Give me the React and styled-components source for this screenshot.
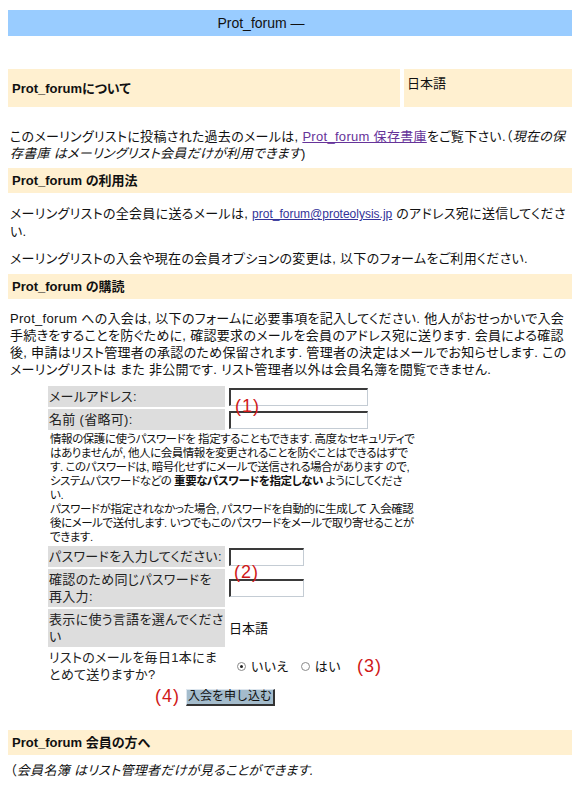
import React from 'react'
import styled, { createGlobalStyle } from 'styled-components'

const GlobalStyle = createGlobalStyle`
  body {
    margin: 8px;
    background: #fff;
    color: #111;
    font-family: "Liberation Sans", "Noto Sans CJK JP", sans-serif;
    font-size: 13px;
    line-height: 17px;
    font-feature-settings: "palt";
  }
`

const Page = styled.div`
  display: flex;
  flex-direction: column;
`

const TitleBar = styled.div`
  margin-top: 2px;
  height: 26px;
  padding-right: 58px;
  background: #99ccff;
  display: flex;
  align-items: center;
  justify-content: center;
  font-size: 14px;
`

const AboutRow = styled.div`
  margin-top: 33px;
  height: 38px;
  display: flex;
  gap: 4px;
`

const AboutCell = styled.div`
  flex: 1;
  background: #fff0d0;
  display: flex;
  align-items: center;
  padding-left: 4px;
  font-weight: bold;
`

const LangCell = styled.div`
  box-sizing: border-box;
  width: 168px;
  background: #fff0d0;
  padding: 6px 3px;
`

const SectionBar = styled.div`
  margin-top: ${p => p.$top}px;
  height: 25px;
  line-height: 25px;
  padding-left: 4px;
  background: #fff0d0;
  font-weight: bold;
`

const Para = styled.p`
  margin: ${p => p.$top}px 0 0 2px;
  letter-spacing: 0.3px;
`

const ArchiveLink = styled.a`
  color: #663399;
  text-decoration: underline;
`

const MailLink = styled.a`
  color: #333399;
  font-size: 12px;
  letter-spacing: 0;
  text-decoration: underline;
`

const Form = styled.div`
  position: relative;
  margin: 8px 0 0 40px;
  width: 365px;
  display: grid;
  grid-template-columns: 177px 1fr;
  column-gap: 4px;
  row-gap: 2px;
`

const Label = styled.div`
  background: ${p => (p.$plain ? 'transparent' : '#dddddd')};
  padding: ${p => (p.$plain ? '0 1px' : '2px 1px')};
  color: #222;
  letter-spacing: 0.3px;
`

const Field = styled.div`
  display: flex;
  align-items: center;
  padding-left: ${p => p.$indent || 0}px;
`

const TextInput = styled.input`
  box-sizing: border-box;
  width: ${p => p.$w}px;
  height: 18px;
  margin: 0;
  padding: 0 2px;
  border-top: 2px solid #3a3a3a;
  border-left: 2px solid #3a3a3a;
  border-right: 1px solid #c4ccd4;
  border-bottom: 1px solid #c4ccd4;
  background: #fff;
`

const Note = styled.div`
  grid-column: 1 / span 2;
  font-size: 11.5px;
  line-height: 14px;
  letter-spacing: -0.45px;
  white-space: nowrap;
  padding: 0 2px;
`

const Radio = styled.input`
  appearance: none;
  width: 9px;
  height: 9px;
  margin: 0 5px 0 0;
  border: 1px solid #8a8a8a;
  border-radius: 50%;
  background: #fff;
  display: grid;
  place-content: center;
  &:checked::before {
    content: '';
    width: 3px;
    height: 3px;
    border-radius: 50%;
    background: #222;
  }
`

const RadioLabel = styled.label`
  display: inline-flex;
  align-items: center;
  margin-right: 12px;
  letter-spacing: 0.5px;
`

const ButtonRow = styled.div`
  grid-column: 1 / span 2;
  display: flex;
  justify-content: center;
  margin-top: 2px;
`

const ButtonWrap = styled.div`
  position: relative;
`

const SubmitButton = styled.button`
  width: 89px;
  height: 17px;
  padding: 0;
  font-family: inherit;
  font-size: 12px;
  line-height: 13px;
  color: #111;
  background: #a4bccc;
  border-top: 1px solid #dde6ee;
  border-left: 1px solid #dde6ee;
  border-right: 2px solid #333;
  border-bottom: 2px solid #333;
`

const Mark = styled.span`
  color: #d01818;
  font-family: "Liberation Sans", sans-serif;
  font-size: 18px;
  line-height: 20px;
  letter-spacing: 1px;
  ${p => p.$at && `
    position: absolute;
    left: ${p.$at[0]}px;
    top: ${p.$at[1]}px;
  `}
  ${p => p.$before && `
    position: absolute;
    right: calc(100% + 6px);
    top: -1px;
  `}
`

const InlineMark = styled(Mark)`
  margin-left: 4px;
`

export default function App() {
  return (
    <Page>
      <GlobalStyle />
      <TitleBar>Prot_forum —</TitleBar>
      <AboutRow>
        <AboutCell>Prot_forumについて</AboutCell>
        <LangCell>日本語</LangCell>
      </AboutRow>

      <Para $top={21}>
        このメーリングリストに投稿された過去のメールは, <ArchiveLink href="#">Prot_forum 保存書庫</ArchiveLink>をご覧下さい.（<i>現在の保存書庫 はメーリングリスト会員だけが利用できます</i>)
      </Para>

      <SectionBar $top={6}>Prot_forum の利用法</SectionBar>
      <Para $top={12}>
        メーリングリストの全会員に送るメールは, <MailLink href="#">prot_forum@proteolysis.jp</MailLink> のアドレス宛に送信してください.
      </Para>
      <Para $top={10}>メーリングリストの入会や現在の会員オプションの変更は, 以下のフォームをご利用ください.</Para>

      <SectionBar $top={7}>Prot_forum の購読</SectionBar>
      <Para $top={11}>
        Prot_forum への入会は, 以下のフォームに必要事項を記入してください. 他人がおせっかいで入会手続きをすることを防ぐために, 確認要求のメールを会員のアドレス宛に送ります. 会員による確認後, 申請はリスト管理者の承認のため保留されます. 管理者の決定はメールでお知らせします. このメーリングリストは また 非公開です. リスト管理者以外は会員名簿を閲覧できません.
      </Para>

      <Form>
        <Label>メールアドレス:</Label>
        <Field><TextInput $w={139} /></Field>
        <Label>名前 (省略可):</Label>
        <Field><TextInput $w={139} /></Field>
        <Note>
          情報の保護に使うパスワードを 指定することもできます. 高度なセキュリティで<br />
          はありませんが, 他人に会員情報を変更されることを防ぐことはできるはずで<br />
          す. このパスワードは, 暗号化せずにメールで送信される場合があります ので,<br />
          システムパスワードなどの <b>重要なパスワードを指定しない</b> ようにしてくださ<br />
          い.<br />
          パスワードが指定されなかった場合, パスワードを自動的に生成して 入会確認<br />
          後にメールで送付します. いつでもこのパスワードをメールで取り寄せることが<br />
          できます.
        </Note>
        <Label>パスワードを入力してください:</Label>
        <Field><TextInput type="password" $w={75} /></Field>
        <Label>確認のため同じパスワードを再入力:</Label>
        <Field><TextInput type="password" $w={75} /></Field>
        <Label>表示に使う言語を選んでください</Label>
        <Field>日本語</Field>
        <Label $plain>リストのメールを毎日1本にまとめて送りますか?</Label>
        <Field $indent={8}>
          <RadioLabel><Radio type="radio" name="digest" defaultChecked />いいえ</RadioLabel>
          <RadioLabel><Radio type="radio" name="digest" />はい</RadioLabel>
          <InlineMark>(3)</InlineMark>
        </Field>
        <ButtonRow>
          <ButtonWrap>
            <Mark $before>(4)</Mark>
            <SubmitButton type="button">入会を申し込む</SubmitButton>
          </ButtonWrap>
        </ButtonRow>
        <Mark $at={[187, 10]}>(1)</Mark>
        <Mark $at={[186, 176]}>(2)</Mark>
      </Form>

      <SectionBar $top={24}>Prot_forum 会員の方へ</SectionBar>
      <Para $top={7}>
        （<i>会員名簿 はリスト管理者だけが見ることができます.</i>
      </Para>
    </Page>
  )
}
